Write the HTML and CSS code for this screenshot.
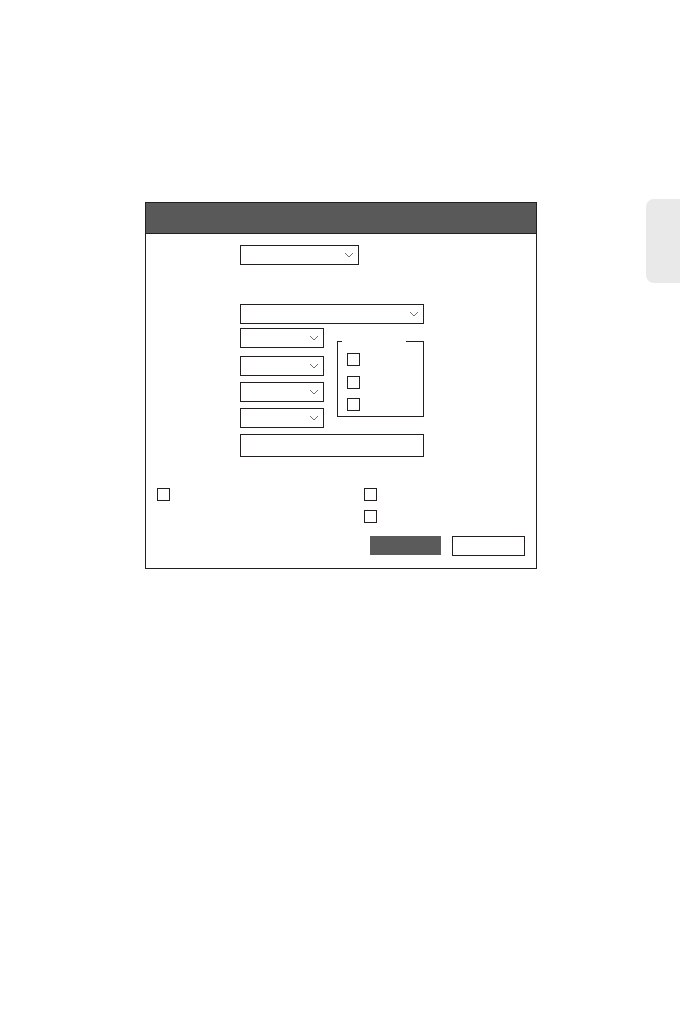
FILE: index.html
```html
<!DOCTYPE html>
<html>
<head>
<meta charset="utf-8">
<link rel="stylesheet" href="styles.css">
</head>
<body>
<div class="page">
  <div class="dialog">
    <div class="header"></div>
    <div class="content">
      <div class="select w119"><svg class="chev" viewBox="0 0 10 6"><polyline points="1,1 5,5 9,1"/></svg></div>
      <div class="select w184 mt39"><svg class="chev" viewBox="0 0 10 6"><polyline points="1,1 5,5 9,1"/></svg></div>
      <div class="mid">
        <div class="col">
          <div class="select w84"><svg class="chev" viewBox="0 0 10 6"><polyline points="1,1 5,5 9,1"/></svg></div>
          <div class="select w84 mt8"><svg class="chev" viewBox="0 0 10 6"><polyline points="1,1 5,5 9,1"/></svg></div>
          <div class="select w84 mt6"><svg class="chev" viewBox="0 0 10 6"><polyline points="1,1 5,5 9,1"/></svg></div>
          <div class="select w84 mt6"><svg class="chev" viewBox="0 0 10 6"><polyline points="1,1 5,5 9,1"/></svg></div>
        </div>
        <div class="fs">
          <div class="fs-top"><span class="seg-l"></span><span class="gap"></span><span class="seg-r"></span></div>
          <div class="fs-body">
            <div class="cb"></div>
            <div class="cb mt10"></div>
            <div class="cb mt9"></div>
          </div>
        </div>
      </div>
      <div class="input"></div>
    </div>
    <div class="bottom">
      <div class="checks">
        <div class="lcol"><div class="cb"></div></div>
        <div class="rcol"><div class="cb"></div><div class="cb mt9"></div></div>
      </div>
      <div class="buttons">
        <div class="btn dark"></div>
        <div class="btn light"></div>
      </div>
    </div>
  </div>
  <div class="tab"></div>
</div>
</body>
</html>
```

FILE: styles.css
```css
html, body { margin: 0; padding: 0; background: #fff; font-family: "Liberation Sans", Arial, sans-serif; }
.page { display: flex; align-items: flex-start; padding-top: 199px; width: 680px; height: 1020px; box-sizing: border-box; }
.dialog { margin-top: 3px; margin-left: 145px; width: 392px; height: 367px; box-sizing: border-box; border: 1px solid #231f20; display: flex; flex-direction: column; }
.header { height: 30px; background: #5a5959; border-bottom: 1px solid #231f20; flex: none; }
.content { padding: 11px 0 0 94px; display: flex; flex-direction: column; align-items: flex-start; }
.select { height: 20px; box-sizing: border-box; border: 1px solid #231f20; display: flex; align-items: center; justify-content: flex-end; padding-right: 4px; }
.w119 { width: 119px; }
.w184 { width: 184px; }
.w84 { width: 84px; }
.mt39 { margin-top: 39px; }
.mt8 { margin-top: 8px; }
.mt6 { margin-top: 6px; }
.mt10 { margin-top: 10px; }
.mt9 { margin-top: 9px; }
.chev { width: 10px; height: 6px; fill: none; stroke: #6d6d6d; stroke-width: 1; }
.mid { display: flex; align-items: flex-start; margin-top: 4px; }
.col { display: flex; flex-direction: column; }
.fs { margin-left: 13px; margin-top: 13px; width: 87px; height: 76px; box-sizing: border-box; border: 1px solid #231f20; border-top: none; display: flex; flex-direction: column; }
.fs-top { display: flex; height: 1px; margin: 0 -1px; }
.seg-l { width: 5px; background: #231f20; }
.gap { width: 64px; }
.seg-r { flex: 1; background: #231f20; }
.fs-body { padding: 11px 0 0 9px; display: flex; flex-direction: column; }
.cb { width: 13px; height: 13px; box-sizing: border-box; border: 1px solid #231f20; }
.input { margin-top: 6px; width: 184px; height: 23px; box-sizing: border-box; border: 1px solid #231f20; }
.bottom { margin-top: 31px; display: flex; flex-direction: column; padding: 0 11px 0 11px; }
.checks { display: flex; }
.lcol { width: 207px; }
.rcol { display: flex; flex-direction: column; }
.buttons { display: flex; justify-content: flex-end; align-items: flex-start; gap: 11px; margin-top: 13px; }
.btn { height: 20px; box-sizing: border-box; }
.dark { width: 71px; height: 19px; background: #5c5b5b; }
.light { width: 73px; border: 1px solid #231f20; }
.tab { margin-left: auto; width: 34px; height: 84px; background: #e9e9e9; border-radius: 8px 0 0 8px; }
```
